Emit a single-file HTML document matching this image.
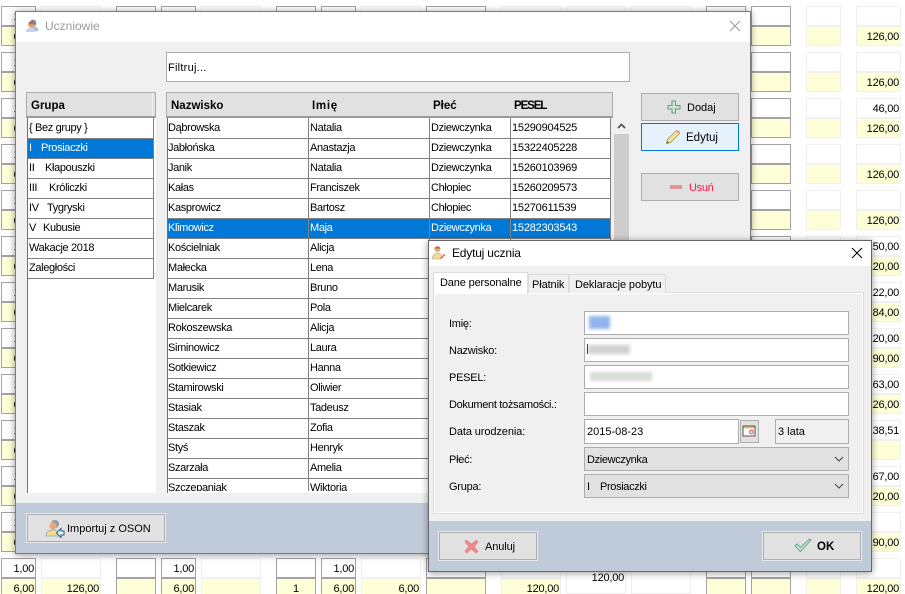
<!DOCTYPE html>
<html lang="pl"><head><meta charset="utf-8"><title>Uczniowie</title>
<style>
html,body{margin:0;padding:0;width:905px;height:594px;overflow:hidden;background:#fff}
body{position:relative;font:11px/14px "Liberation Sans",sans-serif;letter-spacing:-.35px;color:#000}
div,span,i,svg{position:absolute;box-sizing:border-box;font-style:normal;white-space:nowrap}
i{height:20px;background:#fff;border:1px solid #f0f0f0;text-align:right;padding-right:1px;line-height:20px;font-size:11px;letter-spacing:-.22px}
i.d{border-color:#a3a3a3}
i.y{background:#ffffd7}
.c1{left:1px;width:35px}.c2{left:41px;width:60px}.c3{left:116px;width:40px}.c4{left:161px;width:35px}.c5{left:201px;width:60px}.c6{left:276px;width:40px}.c7{left:321px;width:35px}.c8{left:361px;width:60px}.c9{left:426px;width:60px}.c10{left:501px;width:60px}.c11{left:566px;width:60px}.c12{left:631px;width:60px}.c13{left:706px;width:40px}.c14{left:751px;width:40px}.c15{left:806px;width:35px}.c16{left:856px;width:45px}
.win{background:#f0f0f0;border:1px solid #7d7d7d;box-shadow:0 1px 7px rgba(0,0,0,.42)}
.tb{background:#fff}
.hd{background:#e1e1e1;border:1px solid #adadad;border-bottom:2px solid #9a9a9a;font-weight:bold;font-size:11.5px;letter-spacing:0}
.hd span{top:6px}
.r{left:0;height:20px;border-bottom:1px solid #808080;line-height:19px;background:#fff}
.s{background:#0078d7;color:#fff}
.r span{top:2px;line-height:15px}
.n{letter-spacing:-.2px}
.v{top:0;width:1px;background:#808080}
.btn{background:#e1e1e1;border:1px solid #adadad;height:29px}
.btn.o{box-shadow:0 0 0 1px #e6eaee}
.f{left:584px;width:265px;height:24px;background:#fff;border:1px solid #adadad}
.f span{top:5px}
.sel{background:#e1e1e1}
.l{left:449px;letter-spacing:-.25px;top:0}
.tab{top:274px;height:19px;background:#f0f0f0;border:1px solid #dcdcdc;border-bottom:0}
</style></head><body>

<!-- column 1 -->
<i class="c1 d" style="top:6px">1,00</i><i class="c1 d y" style="top:26px">6,00</i>
<i class="c1 d" style="top:52px">1,00</i><i class="c1 d y" style="top:72px">6,00</i>
<i class="c1 d" style="top:98px">1,00</i><i class="c1 d y" style="top:118px">6,00</i>
<i class="c1 d" style="top:144px">1,00</i><i class="c1 d y" style="top:164px">6,00</i>
<i class="c1 d" style="top:190px">1,00</i><i class="c1 d y" style="top:210px">6,00</i>
<i class="c1 d" style="top:236px">1,00</i><i class="c1 d y" style="top:256px">6,00</i>
<i class="c1 d" style="top:282px">1,00</i><i class="c1 d y" style="top:302px">6,00</i>
<i class="c1 d" style="top:328px">1,00</i><i class="c1 d y" style="top:348px">6,00</i>
<i class="c1 d" style="top:374px">1,00</i><i class="c1 d y" style="top:394px">6,00</i>
<i class="c1 d" style="top:420px">1,00</i><i class="c1 d y" style="top:440px">6,00</i>
<i class="c1 d" style="top:466px">1,00</i><i class="c1 d y" style="top:486px">6,00</i>
<i class="c1 d" style="top:512px">1,00</i><i class="c1 d y" style="top:532px">6,00</i>

<!-- top strip -->
<i class="c2" style="top:6px"></i><i class="c3 d" style="top:6px"></i><i class="c4 d" style="top:6px"></i><i class="c5" style="top:6px"></i><i class="c6 d" style="top:6px"></i><i class="c7 d" style="top:6px"></i><i class="c8" style="top:6px"></i><i class="c9 d" style="top:6px"></i><i class="c10" style="top:6px"></i><i class="c11" style="top:6px"></i><i class="c12" style="top:6px"></i><i class="c13 d" style="top:6px"></i>

<!-- right columns -->
<i class="c14 d" style="top:6px"></i><i class="c14 d y" style="top:26px"></i><i class="c15" style="top:6px"></i><i class="c15 y" style="top:26px"></i><i class="c16" style="top:6px"></i><i class="c16 y" style="top:26px">126,00</i>
<i class="c14 d" style="top:52px"></i><i class="c14 d y" style="top:72px"></i><i class="c15" style="top:52px"></i><i class="c15 y" style="top:72px"></i><i class="c16" style="top:52px"></i><i class="c16 y" style="top:72px">126,00</i>
<i class="c14 d" style="top:98px"></i><i class="c14 d y" style="top:118px"></i><i class="c15" style="top:98px"></i><i class="c15 y" style="top:118px"></i><i class="c16" style="top:98px">46,00</i><i class="c16 y" style="top:118px">126,00</i>
<i class="c14 d" style="top:144px"></i><i class="c14 d y" style="top:164px"></i><i class="c15" style="top:144px"></i><i class="c15 y" style="top:164px"></i><i class="c16" style="top:144px"></i><i class="c16 y" style="top:164px">126,00</i>
<i class="c14 d" style="top:190px"></i><i class="c14 d y" style="top:210px"></i><i class="c15" style="top:190px"></i><i class="c15 y" style="top:210px"></i><i class="c16" style="top:190px"></i><i class="c16 y" style="top:210px">126,00</i>
<i class="c14 d" style="top:236px"></i><i class="c15" style="top:236px"></i><i class="c16" style="top:236px">150,00</i><i class="c16 y" style="top:256px">120,00</i>
<i class="c16" style="top:282px">122,00</i><i class="c16 y" style="top:302px">84,00</i>
<i class="c16" style="top:328px">120,00</i><i class="c16 y" style="top:348px">90,00</i>
<i class="c16" style="top:374px">163,00</i><i class="c16 y" style="top:394px">126,00</i>
<i class="c16" style="top:420px">138,51</i><i class="c16 y" style="top:440px"></i>
<i class="c16" style="top:466px">167,00</i><i class="c16 y" style="top:486px">120,00</i>
<i class="c16" style="top:512px"></i><i class="c16 y" style="top:532px">190,00</i>

<!-- bottom row -->
<i class="c1 d" style="top:558px">1,00</i><i class="c1 d y" style="top:578px">6,00</i>
<i class="c2" style="top:558px"></i><i class="c2 y" style="top:578px">126,00</i>
<i class="c3 d" style="top:558px"></i><i class="c3 d y" style="top:578px"></i>
<i class="c4 d" style="top:558px">1,00</i><i class="c4 d y" style="top:578px">6,00</i>
<i class="c5" style="top:558px"></i><i class="c5 y" style="top:578px"></i>
<i class="c6 d" style="top:558px"></i><i class="c6 d y" style="top:578px;text-align:center;padding:0">1</i>
<i class="c7 d" style="top:558px">1,00</i><i class="c7 d y" style="top:578px">6,00</i>
<i class="c8" style="top:558px"></i><i class="c8 y" style="top:578px">6,00</i>
<i class="c9 d" style="top:558px"></i><i class="c9 d y" style="top:578px"></i>
<i class="c10" style="top:558px"></i><i class="c10 y" style="top:578px">120,00</i>
<i class="c11" style="top:558px;height:36px;line-height:39px">120,00</i>
<i class="c12" style="top:558px;height:36px"></i>
<i class="c13 d" style="top:558px"></i><i class="c13 d y" style="top:578px"></i>
<i class="c14 d" style="top:558px"></i><i class="c14 d y" style="top:578px"></i>
<i class="c15" style="top:558px"></i><i class="c15 y" style="top:578px"></i>
<i class="c16" style="top:558px"></i><i class="c16 y" style="top:578px">120,00</i>

<!-- MAIN WINDOW -->
<div class="win" style="left:15px;top:11px;width:736px;height:543px"></div>
<div class="tb" style="left:16px;top:12px;width:734px;height:30px"></div>
<svg style="left:25px;top:19px" width="14" height="14" viewBox="0 0 14 14"><circle cx="8" cy="4" r="3.4" fill="#7d8ba0"/><path d="M3 12c.5-3 3-4.500 6-4.500s4 1.500 4.500 4.500z" fill="#a9bad0"/><circle cx="6" cy="5.500" r="2.900" fill="#e0986a"/><path d="M3.200 4.500c.8-2.200 4.800-2.400 5.600 0z" fill="#a05f34"/><path d="M.8 13c.5-3 2.400-4.500 5.200-4.500s4.200 1.500 4.800 4.500z" fill="#c6d4e4"/></svg>
<span style="left:45px;top:19px;color:#9a9a9a;font-size:12px;letter-spacing:0">Uczniowie</span>
<svg style="left:729px;top:20px" width="12" height="12" viewBox="0 0 12 12"><path d="M1 1l10 10M11 1L1 11" stroke="#9a9a9a" stroke-width="1" fill="none"/></svg>

<div style="left:166px;top:52px;width:464px;height:30px;background:#fff;border:1px solid #adadad"><span style="left:1px;top:8px;letter-spacing:.25px">Filtruj...</span></div>

<!-- Grupa -->
<div style="left:27px;top:117px;width:129px;height:376px;background:#fff;border-left:1px solid #707070"></div>
<div class="hd" style="left:26px;top:92px;width:130px;height:26px"><span style="left:4px">Grupa</span><div style="left:125px;top:0;width:1px;height:23px;background:#f0f0f0"></div></div>
<div style="left:28px;top:118px;width:126px;height:161px;border-right:1px solid #808080"><div style="left:0;top:1px;width:125px">
<div class="r" style="top:0;width:125px;background:none"><span style="left:1px">{ Bez grupy }</span></div>
<div class="r s" style="top:20px;width:125px"><span style="left:1px">I</span><span style="left:13px">Prosiaczki</span></div>
<div class="r" style="top:40px;width:125px"><span style="left:1px">II</span><span style="left:17px">Kłapouszki</span></div>
<div class="r" style="top:60px;width:125px"><span style="left:1px">III</span><span style="left:21px">Króliczki</span></div>
<div class="r" style="top:80px;width:125px"><span style="left:1px">IV</span><span style="left:19px">Tygryski</span></div>
<div class="r" style="top:100px;width:125px"><span style="left:1px">V</span><span style="left:15px">Kubusie</span></div>
<div class="r" style="top:120px;width:125px"><span style="left:1px">Wakacje 2018</span></div>
<div class="r" style="top:140px;width:125px"><span style="left:1px">Zaległości</span></div>
</div></div>

<!-- Uczniowie grid -->
<div style="left:167px;top:117px;width:444px;height:376px;background:#fff;border-left:1px solid #707070"></div>
<div class="hd" style="left:166px;top:92px;width:447px;height:26px"><span style="left:4px">Nazwisko</span><span style="left:145px;letter-spacing:.7px">Imię</span><span style="left:266px">Płeć</span><span style="left:347px;letter-spacing:-1.1px">PESEL</span></div>
<div style="left:168px;top:118px;width:443px;height:373px;overflow:hidden"><div style="left:0;top:1px;width:443px">
<div class="r" style="top:0;width:443px;background:none"><span style="left:0">Dąbrowska</span><span style="left:142px">Natalia</span><span style="left:263px">Dziewczynka</span><span class="n" style="left:344px">15290904525</span></div>
<div class="r" style="top:20px;width:443px"><span style="left:0">Jabłońska</span><span style="left:142px">Anastazja</span><span style="left:263px">Dziewczynka</span><span class="n" style="left:344px">15322405228</span></div>
<div class="r" style="top:40px;width:443px"><span style="left:0">Janik</span><span style="left:142px">Natalia</span><span style="left:263px">Dziewczynka</span><span class="n" style="left:344px">15260103969</span></div>
<div class="r" style="top:60px;width:443px"><span style="left:0">Kałas</span><span style="left:142px">Franciszek</span><span style="left:263px">Chłopiec</span><span class="n" style="left:344px">15260209573</span></div>
<div class="r" style="top:80px;width:443px"><span style="left:0">Kasprowicz</span><span style="left:142px">Bartosz</span><span style="left:263px">Chłopiec</span><span class="n" style="left:344px">15270611539</span></div>
<div class="r s" style="top:100px;width:443px"><span style="left:0">Klimowicz</span><span style="left:142px">Maja</span><span style="left:263px">Dziewczynka</span><span class="n" style="left:344px">15282303543</span></div>
<div class="r" style="top:120px;width:443px"><span style="left:0">Kościelniak</span><span style="left:142px">Alicja</span></div>
<div class="r" style="top:140px;width:443px"><span style="left:0">Małecka</span><span style="left:142px">Lena</span></div>
<div class="r" style="top:160px;width:443px"><span style="left:0">Marusik</span><span style="left:142px">Bruno</span></div>
<div class="r" style="top:180px;width:443px"><span style="left:0">Mielcarek</span><span style="left:142px">Pola</span></div>
<div class="r" style="top:200px;width:443px"><span style="left:0">Rokoszewska</span><span style="left:142px">Alicja</span></div>
<div class="r" style="top:220px;width:443px"><span style="left:0">Siminowicz</span><span style="left:142px">Laura</span></div>
<div class="r" style="top:240px;width:443px"><span style="left:0">Sotkiewicz</span><span style="left:142px">Hanna</span></div>
<div class="r" style="top:260px;width:443px"><span style="left:0">Stamirowski</span><span style="left:142px">Oliwier</span></div>
<div class="r" style="top:280px;width:443px"><span style="left:0">Stasiak</span><span style="left:142px">Tadeusz</span></div>
<div class="r" style="top:300px;width:443px"><span style="left:0">Staszak</span><span style="left:142px">Zofia</span></div>
<div class="r" style="top:320px;width:443px"><span style="left:0">Styś</span><span style="left:142px">Henryk</span></div>
<div class="r" style="top:340px;width:443px"><span style="left:0">Szarzała</span><span style="left:142px">Amelia</span></div>
<div class="r" style="top:360px;width:443px"><span style="left:0">Szczepaniak</span><span style="left:142px">Wiktoria</span></div>
</div>
<div class="v" style="left:140px;height:373px"></div><div class="v" style="left:261px;height:373px"></div><div class="v" style="left:342px;height:373px"></div><div class="v" style="left:442px;height:373px"></div>
</div>

<!-- scrollbar -->
<div style="left:614px;top:118px;width:15px;height:375px;background:#f0f0f0"></div>
<svg style="left:616px;top:122px" width="11" height="8" viewBox="0 0 11 8"><path d="M2 6l3.500-3.500L9 6" stroke="#505050" stroke-width="1.700" fill="none"/></svg>
<div style="left:614px;top:134px;width:15px;height:120px;background:#cdcdcd"></div>

<!-- side buttons -->
<div class="btn" style="left:641px;top:93px;width:98px;height:28px"></div>
<svg style="left:667px;top:100px" width="14" height="14" viewBox="0 0 14 14"><path d="M5 1h3.500v4.500H13V9H8.500v4H5V9H1V5.500h4z" fill="#cfe6d4" stroke="#5f9e7d" stroke-width="1"/></svg>
<span style="left:687px;top:101px;letter-spacing:0">Dodaj</span>
<div style="left:641px;top:123px;width:98px;height:28px;background:#e5f1fb;border:1px solid #0078d7"></div>
<svg style="left:665px;top:129px" width="16" height="16" viewBox="0 0 16 16"><path d="M1.500 14.500l1-4L11.500 1.500l3 3-9 9z" fill="#f5e3a0" stroke="#a89252" stroke-width=".8"/><path d="M11 2l3 3 1-1.200c-.3-1.300-1.400-2.300-2.700-2.700z" fill="#ea8c8c"/><path d="M1.500 14.500l.6-2.500 1.900 1.900z" fill="#555"/></svg>
<span style="left:686px;top:131px;font-size:11.5px;letter-spacing:0">Edytuj</span>
<div class="btn" style="left:641px;top:173px;width:98px;height:28px"></div>
<div style="left:670px;top:185px;width:12px;height:4px;background:#ee8a92;border:1px solid #dd9aa0"></div>
<span style="left:689px;top:181px;letter-spacing:-.3px;color:#ff1a44">Usuń</span>

<!-- bottom panel main -->
<div style="left:16px;top:503px;width:734px;height:50px;background:#bfcbd9"></div>
<div class="btn o" style="left:27px;top:514px;width:138px;height:28px"></div>
<svg style="left:45px;top:519px" width="20" height="19" viewBox="0 0 20 19"><circle cx="10" cy="5" r="4" fill="#8f99a8"/><circle cx="8" cy="7" r="3.600" fill="#eba777"/><path d="M1 17c.5-4 3-6 7-6s5 1.500 6 4v2z" fill="#f2dc8a" stroke="#8fa6c0" stroke-width=".7"/><path d="M11.500 14l4.500-4.500V12h3v4h-3v2.500z" fill="#e5f1fb" stroke="#245e8c" stroke-width="1"/></svg>
<span style="left:67px;top:522px;letter-spacing:0">Importuj z OSON</span>

<!-- DIALOG -->
<div class="win" style="left:428px;top:240px;width:444px;height:332px;border-color:#666"></div>
<div class="tb" style="left:429px;top:241px;width:442px;height:25px"></div>
<svg style="left:431px;top:245px" width="15" height="15" viewBox="0 0 15 15"><circle cx="6.500" cy="4" r="3" fill="#eba777"/><path d="M3.500 3.500c.8-2.400 5-2.400 6 0z" fill="#a8703c"/><path d="M1 14c.3-3.500 2.500-6 5.500-6s4.500 2 5 4l-2 2z" fill="#f2dc8a" stroke="#8fa6c0" stroke-width=".5"/><path d="M9 13l4.500-4 1 1-4.500 4z" fill="#d8606e"/></svg>
<span style="left:452px;top:246px;font-size:12px;letter-spacing:-.2px">Edytuj ucznia</span>
<svg style="left:851px;top:247px" width="12" height="12" viewBox="0 0 12 12"><path d="M1 1l10 10M11 1L1 11" stroke="#000" stroke-width="1" fill="none"/></svg>

<!-- tabs -->
<div style="left:433px;top:292px;width:431px;height:222px;background:#f0f0f0;border:1px solid #dcdcdc;box-shadow:inset 0 0 0 1px #fff"></div>
<div class="tab" style="left:528px;width:41px"><span style="left:3px;top:3px;letter-spacing:-.1px">Płatnik</span></div>
<div class="tab" style="left:569px;width:97px"><span style="left:5px;top:3px;letter-spacing:-.1px">Deklaracje pobytu</span></div>
<div style="left:433px;top:272px;width:95px;height:22px;background:#fff;border:1px solid #dcdcdc;border-bottom:0"><span style="left:6px;top:3px;letter-spacing:-.15px">Dane personalne</span></div>

<!-- fields -->
<span class="l" style="top:317px">Imię:</span>
<span class="l" style="top:344px">Nazwisko:</span>
<span class="l" style="top:371px">PESEL:</span>
<span class="l" style="top:398px;letter-spacing:-.32px">Dokument tożsamości.:</span>
<span class="l" style="top:425px;letter-spacing:-.1px">Data urodzenia:</span>
<span class="l" style="top:453px">Płeć:</span>
<span class="l" style="top:480px">Grupa:</span>

<div class="f" style="top:311px"></div>
<div style="left:589px;top:316px;width:21px;height:13px;background:#92b4ea;filter:blur(1.500px)"></div>
<div class="f" style="top:338px"></div>
<div style="left:588px;top:345px;width:42px;height:9px;background:#d0d0d0;filter:blur(1.800px)"></div>
<div style="left:587px;top:344px;width:1px;height:10px;background:#333a7c"></div>
<div class="f" style="top:365px"></div>
<div style="left:590px;top:372px;width:62px;height:9px;background:#d6dcd6;filter:blur(1.500px)"></div>
<div class="f" style="top:392px"></div>
<div class="f" style="top:419px;width:155px;height:25px"><span style="left:2px;letter-spacing:0">2015-08-23</span></div>
<div style="left:740px;top:420px;width:19px;height:23px;background:#e1e1e1;border:1px solid #adadad"></div>
<svg style="left:742px;top:424px" width="14" height="14" viewBox="0 0 14 14"><rect x="1" y="2" width="12" height="10" fill="#fff" stroke="#555" stroke-width="1"/><rect x="1.500" y="2.500" width="11" height="2" fill="#e8c070"/><circle cx="9.500" cy="8" r="1.800" fill="none" stroke="#d83c3c" stroke-width="1"/></svg>
<div class="f" style="left:775px;top:419px;width:74px;height:25px;background:#f0f0f0"><span style="left:2px;letter-spacing:0">3 lata</span></div>
<div class="f sel" style="top:447px"><span style="left:2px">Dziewczynka</span></div>
<svg style="left:834px;top:456px" width="10" height="7" viewBox="0 0 10 7"><path d="M1 1l4 4 4-4" stroke="#444" stroke-width="1" fill="none"/></svg>
<div class="f sel" style="top:474px"><span style="left:2px">I</span><span style="left:15px">Prosiaczki</span></div>
<svg style="left:834px;top:483px" width="10" height="7" viewBox="0 0 10 7"><path d="M1 1l4 4 4-4" stroke="#444" stroke-width="1" fill="none"/></svg>

<!-- dialog bottom -->
<div style="left:429px;top:521px;width:442px;height:50px;background:#bfcbd9"></div>
<div class="btn o" style="left:439px;top:532px;width:98px;height:28px"></div>
<svg style="left:464px;top:539px" width="15" height="15" viewBox="0 0 15 15"><path d="M2 1l5.500 4L12.500 1 14 3l-4 4.500 4 5-2 1.500-4.500-4-5 4L1 12l4-4.500L1 3z" fill="#f0888c" stroke="#e87478" stroke-width=".6"/></svg>
<span style="left:485px;top:540px;letter-spacing:-.1px">Anuluj</span>
<div class="btn o" style="left:763px;top:532px;width:98px;height:28px"></div>
<svg style="left:794px;top:537px" width="18" height="16" viewBox="0 0 18 16"><path d="M1 9l2-2 3.500 3.500L15.500 2 17 3 6.500 14.500z" fill="#cfe8d8" stroke="#6aa888" stroke-width="1"/></svg>
<span style="left:817px;top:540px;font-size:11.5px;font-weight:bold;letter-spacing:0">OK</span>
</body></html>
